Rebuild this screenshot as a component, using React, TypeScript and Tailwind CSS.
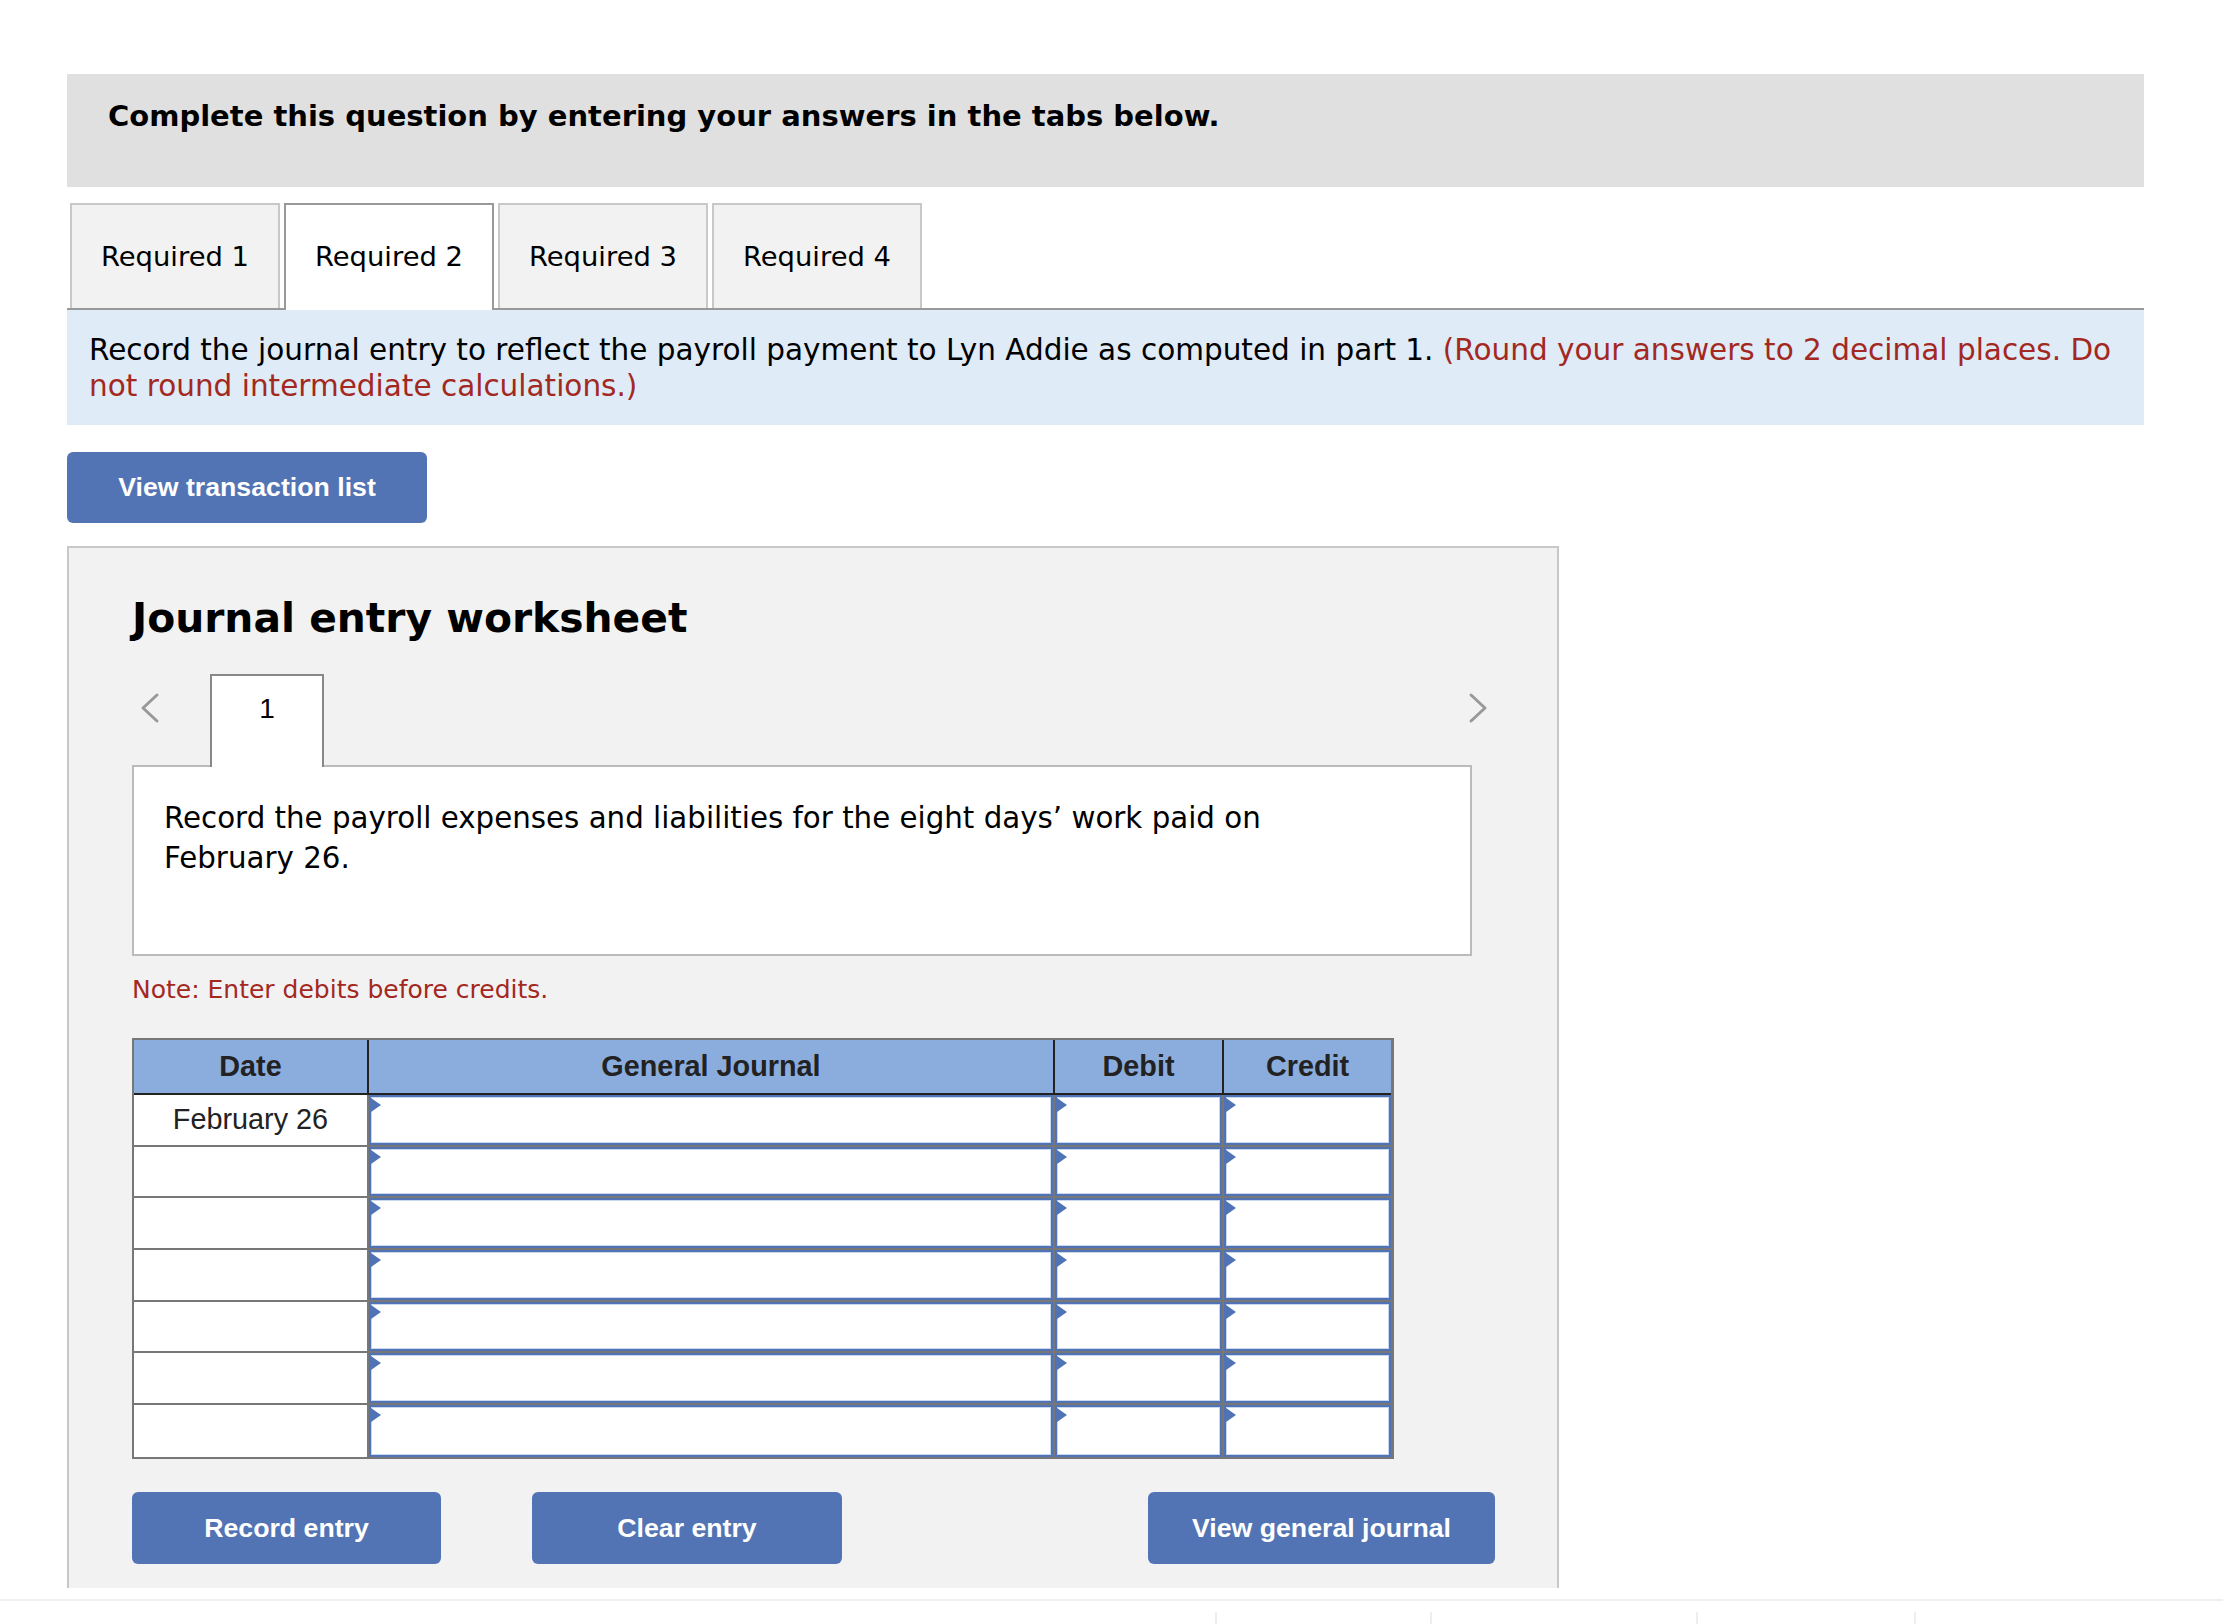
const rows = [0, 1, 2, 3, 4, 5, 6];

function Flag() {
  return (
    <svg className="absolute left-0 top-[1px]" width="10" height="14" viewBox="0 0 10 14">
      <polygon points="0,0 10,7 0,14" fill="#4f73b5" />
    </svg>
  );
}

function InputCell({ width, last }: { width: string; last?: boolean }) {
  return (
    <div className={`${width} h-full ${last ? "" : "border-r-2 border-[#777]"}`}>
      <div className="relative h-full bg-white border-2 border-[#4f73b5] shadow-[inset_0_0_0_1px_#c9d7ef]">
        <Flag />
      </div>
    </div>
  );
}

function Chevron({ dir }: { dir: "left" | "right" }) {
  return (
    <svg width="20" height="32" viewBox="0 0 20 32">
      <polyline
        points={dir === "right" ? "3,3 17,16 3,29" : "17,3 3,16 17,29"}
        fill="none"
        stroke="#999"
        strokeWidth="3"
        strokeLinecap="round"
        strokeLinejoin="round"
      />
    </svg>
  );
}

export default function App() {
  const tabs = ["Required 1", "Required 2", "Required 3", "Required 4"];
  const active = 1;

  return (
    <div className="min-h-screen bg-white font-['DejaVu_Sans',Verdana,sans-serif] text-black">
      <div className="ml-[67px] w-[2077px] pt-[74px]">
        {/* banner */}
        <div className="h-[113px] bg-[#e0e0e0] pl-[41px] pt-[24px] text-[29px] font-bold leading-[36px]">
          Complete this question by entering your answers in the tabs below.
        </div>

        {/* tabs */}
        <div className="mt-[16px] flex items-end gap-[4px] pl-[3px] border-b-2 border-[#999]">
          {tabs.map((t, i) => (
            <div
              key={t}
              className={
                i === active
                  ? "relative z-10 -mb-[2px] flex h-[107px] w-[210px] items-center justify-center border-2 border-b-0 border-[#999] bg-white pb-[2px] text-[27.4px]"
                  : "flex h-[105px] w-[210px] items-center justify-center border-2 border-b-0 border-[#c8c8c8] bg-[#f2f2f2] text-[27.4px]"
              }
            >
              {t}
            </div>
          ))}
        </div>

        {/* instructions */}
        <div className="bg-[#dfebf6] px-[22px] pt-[22px] pb-[21px] text-[29.5px] leading-[36px]">
          Record the journal entry to reflect the payroll payment to Lyn Addie as computed in part 1.{" "}
          <span className="text-[#a3281f]">
            (Round your answers to 2 decimal places. Do not round intermediate calculations.)
          </span>
        </div>

        <button className="mt-[27px] h-[71px] w-[360px] rounded-[6px] bg-[#5274b4] font-['Liberation_Sans',Arial,sans-serif] text-[26.7px] font-bold text-white">
          View transaction list
        </button>

        {/* worksheet */}
        <div className="mt-[23px] w-[1492px] border-2 border-b-0 border-[#c8c8c8] bg-[#f2f2f2] pl-[63px] pt-[45px] pb-[24px]">
          <h2 className="text-[40.8px] font-bold leading-[50px]">Journal entry worksheet</h2>

          <div className="mt-[31px] flex h-[91px] w-[1356px] items-start">
            <div className="w-[78px] pl-[8px] pt-[18px]">
              <Chevron dir="left" />
            </div>
            <div className="relative z-10 h-[93px] w-[114px] border-2 border-b-0 border-[#888] bg-white pt-[15px] text-center font-['Liberation_Sans',Arial,sans-serif] text-[28px] leading-[36px]">
              1
            </div>
            <div className="flex-1" />
            <div className="pt-[18px]">
              <Chevron dir="right" />
            </div>
          </div>

          <div className="h-[191px] w-[1340px] border-2 border-[#bbb] bg-white pl-[30px] pt-[31px] text-[29.3px] leading-[40px]">
            Record the payroll expenses and liabilities for the eight days’ work paid on
            <br />
            February 26.
          </div>

          <div className="mt-[18px] text-[25px] leading-[32px] text-[#a3281f]">
            Note: Enter debits before credits.
          </div>

          {/* journal table */}
          <div className="mt-[32px] w-[1262px] border-2 border-r-[3px] border-[#777] font-['Liberation_Sans',Arial,sans-serif]">
            <div className="flex h-[55px] border-b-2 border-[#222] bg-[#8badde] text-[28.8px] font-bold text-[#222]">
              <div className="flex w-[235px] items-center justify-center border-r-2 border-[#222]">Date</div>
              <div className="flex w-[686px] items-center justify-center border-r-2 border-[#222]">General Journal</div>
              <div className="flex w-[169px] items-center justify-center border-r-2 border-[#222]">Debit</div>
              <div className="flex flex-1 items-center justify-center">Credit</div>
            </div>
            {rows.map((r) => (
              <div
                key={r}
                className={`flex h-[51.7px] ${r < rows.length - 1 ? "border-b-2 border-[#777]" : ""}`}
              >
                <div className="flex w-[235px] items-center justify-center border-r-2 border-[#777] bg-white text-[28.8px] text-[#222]">
                  {r === 0 ? "February 26" : ""}
                </div>
                <InputCell width="w-[686px]" />
                <InputCell width="w-[169px]" />
                <InputCell width="flex-1" last />
              </div>
            ))}
          </div>

          <div className="mt-[33px] flex font-['Liberation_Sans',Arial,sans-serif] text-[26.7px] font-bold text-white">
            <button className="h-[72px] w-[309px] rounded-[6px] bg-[#5274b4]">Record entry</button>
            <button className="ml-[91px] h-[72px] w-[310px] rounded-[6px] bg-[#5274b4]">Clear entry</button>
            <button className="ml-[306px] h-[72px] w-[347px] rounded-[6px] bg-[#5274b4]">View general journal</button>
          </div>
        </div>
      </div>

      {/* footer start */}
      <div className="mt-[11px] border-t-2 border-[#efefef] pt-[11px]">
        <div className="flex h-[20px]">
          <div className="ml-[1215px] w-[2px] bg-[#eee]" />
          <div className="ml-[213px] w-[2px] bg-[#eee]" />
          <div className="ml-[264px] w-[2px] bg-[#eee]" />
          <div className="ml-[216px] w-[2px] bg-[#eee]" />
        </div>
      </div>
    </div>
  );
}
